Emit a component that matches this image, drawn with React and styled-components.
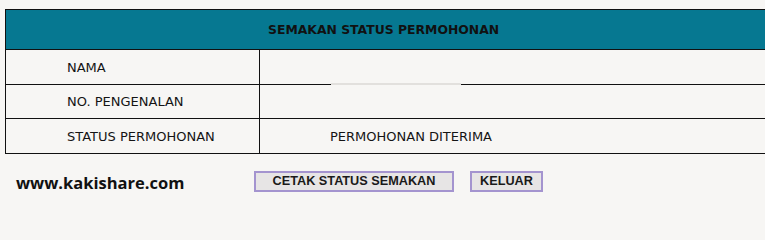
import React from "react";
import styled, { createGlobalStyle } from "styled-components";

const Global = createGlobalStyle`
  html, body { margin: 0; padding: 0; background: #f7f6f4; overflow: hidden; }
  #root { width: 765px; height: 201px; overflow: hidden; }
`;

const Page = styled.div`
  padding: 9px 0 0 5px;
  font-family: "DejaVu Sans", Verdana, sans-serif;
  color: #141414;
`;

const Table = styled.table`
  width: 800px;
  border-collapse: collapse;
  table-layout: fixed;
`;

const LabelCol = styled.col`
  width: 254px;
`;

const HeaderCell = styled.th`
  background: #067891;
  border: 1px solid #111;
  height: 39px;
  padding: 0 0 0 262px;
  text-align: left;
  font-size: 12.4px;
  font-weight: bold;
  color: #111;
`;

const Row = styled.tr`
  height: ${(p) => p.$h}px;
`;

const LabelCell = styled.td`
  border: 1px solid #111;
  padding: 0 0 0 61px;
  font-size: 13px;
`;

const ValueCell = styled.td`
  position: relative;
  border: 1px solid #111;
  padding: 0 0 0 70px;
  font-size: 13px;
  ${(p) =>
    p.$smudge &&
    `
    &::after {
      content: "";
      position: absolute;
      left: 71px;
      width: 130px;
      bottom: -1px;
      height: 2px;
      background: #e2e0dd;
    }
  `}
`;

const Footer = styled.div`
  display: flex;
  align-items: center;
  margin-top: 15px;
  padding-left: 11px;
`;

const Site = styled.div`
  width: 238px;
  font-family: "Open Sans", sans-serif;
  font-weight: bold;
  font-size: 16.5px;
  line-height: 20px;
  color: #111;
  padding-top: 4px;
`;

const Buttons = styled.div`
  display: flex;
  gap: 16px;
`;

const Button = styled.button`
  height: 21px;
  width: ${(p) => p.$w}px;
  padding: 0;
  border: 2px solid #a494cf;
  background: #e7e5e5;
  font-family: "Liberation Sans", Arial, sans-serif;
  font-weight: bold;
  font-size: 12.7px;
  color: #1a1a1a;
  box-sizing: border-box;
`;

export default function App() {
  return (
    <>
      <Global />
      <Page>
        <Table>
          <colgroup>
            <LabelCol />
            <col />
          </colgroup>
          <thead>
            <tr>
              <HeaderCell colSpan={2}>SEMAKAN STATUS PERMOHONAN</HeaderCell>
            </tr>
          </thead>
          <tbody>
            <Row $h={35}>
              <LabelCell>NAMA</LabelCell>
              <ValueCell $smudge />
            </Row>
            <Row $h={34}>
              <LabelCell>NO. PENGENALAN</LabelCell>
              <ValueCell />
            </Row>
            <Row $h={35}>
              <LabelCell>STATUS PERMOHONAN</LabelCell>
              <ValueCell>PERMOHONAN DITERIMA</ValueCell>
            </Row>
          </tbody>
        </Table>
        <Footer>
          <Site>www.kakishare.com</Site>
          <Buttons>
            <Button $w={200}>CETAK STATUS SEMAKAN</Button>
            <Button $w={73}>KELUAR</Button>
          </Buttons>
        </Footer>
      </Page>
    </>
  );
}
